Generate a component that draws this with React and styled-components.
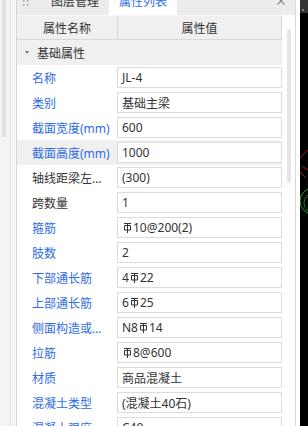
import React from 'react';
import styled, { createGlobalStyle } from 'styled-components';

const Global = createGlobalStyle`
  html, body { margin: 0; padding: 0; background: #fff; overflow: hidden; }
  body {
    font-family: "Noto Sans", "Noto Sans CJK SC", sans-serif;
    font-size: 12px;
    color: #333;
  }
  * { box-sizing: border-box; }
`;

const Screen = styled.div`
  display: flex;
  width: 308px;
  height: 426px;
  overflow: hidden;
  background: #fff;
`;

const SideStrip = styled.div`
  width: 16px;
  flex: none;
  display: flex;
  background: #f4f4f4;
`;

const SideThumbCol = styled.div`
  width: 11px;
  padding: 0 4px 0 2px;
  border-right: 1px solid #e0e0e0;
`;

const SideThumb = styled.div`
  height: 137px;
  border-radius: 0 0 2px 2px;
  background: #e0e0e0;
`;

const Panel = styled.div`
  width: 280px;
  flex: none;
  display: flex;
  flex-direction: column;
  border-left: 1px solid #d4d4d4;
  border-right: 1px solid #d9d9d9;
  background: #fff;
`;

const TabBar = styled.div`
  height: 28px;
  margin-top: -13px;
  flex: none;
  display: flex;
  align-items: stretch;
  background: #ececec;
`;

const Tab = styled.div`
  display: flex;
  align-items: center;
  padding: 0 10px 0 ${(p) => (p.$grip ? 6 : 10)}px;
  gap: 22px;
  background: ${(p) => (p.$active ? '#fff' : 'transparent')};
  color: ${(p) => (p.$active ? '#2e6be6' : '#333')};
  white-space: nowrap;
`;

const Close = styled.div`
  margin-left: auto;
  margin-right: 10px;
  display: flex;
  align-items: center;
`;

const Body = styled.div`
  flex: 1;
  display: flex;
  min-height: 0;
`;

const Table = styled.div`
  width: 265px;
  flex: none;
  display: flex;
  flex-direction: column;
`;

const ScrollCol = styled.div`
  flex: 1;
  padding: 14px 4px 0 5px;
`;

const ScrollThumb = styled.div`
  height: 154px;
  border-radius: 2px;
  background: #e6e6e6;
`;

const HeaderRow = styled.div`
  display: grid;
  grid-template-columns: 100px 165px;
  height: 25px;
  flex: none;
  background: #f0f0f0;
`;

const HeaderCell = styled.div`
  display: flex;
  align-items: center;
  justify-content: center;
  border-bottom: 1px solid #d9d9d9;
  border-top: 1px solid #f7f7f7;
  ${(p) => p.$value && 'border-left: 1px solid #d9d9d9; border-right: 1px solid #d9d9d9;'}
`;

const GroupRow = styled.div`
  height: 25px;
  flex: none;
  display: flex;
  align-items: center;
  gap: 8px;
  padding-left: 8px;
  background: #f0f0f0;
`;

const Caret = styled.span`
  width: 0;
  height: 0;
  border-left: 2.5px solid transparent;
  border-right: 2.5px solid transparent;
  border-top: 3px solid #777;
`;

const PropRow = styled.div`
  display: grid;
  grid-template-columns: 100px 165px;
  align-items: center;
  height: 25px;
  flex: none;
  background: ${(p) => (p.$hover ? '#f0f0f0' : '#fff')};
`;

const Label = styled.div`
  padding: 0 6px 0 15px;
  color: ${(p) => (p.$plain ? '#333' : '#2e6be6')};
  white-space: nowrap;
  overflow: hidden;
  text-overflow: ellipsis;
`;

const ValueBox = styled.div`
  height: 21px;
  display: flex;
  align-items: center;
  padding: 0 4px;
  border: 1px solid #dcdcdc;
  background: #fff;
  color: #333;
  white-space: nowrap;
  overflow: hidden;
`;

const Canvas = styled.div`
  flex: 1;
  margin-left: 4px;
  background: #000;
  position: relative;
`;

const CanvasArt = styled.svg`
  position: absolute;
  inset: 0;
`;

const Rebar = styled.svg`
  width: 9px;
  height: 11px;
  margin: 0 1px 0 1px;
  flex: none;
`;

const RebarSym = () => (
  <Rebar viewBox="0 0 9 11">
    <path d="M1 1.5H8M4.5 1.5V11M1.5 3.5H7.5V8H1.5Z" fill="none" stroke="#333" strokeWidth="1" />
  </Rebar>
);

const Grip = () => (
  <svg width="6" height="10" viewBox="0 0 6 10">
    {[0, 4].map((x) =>
      [1, 5, 9].map((y) => <rect key={`${x}-${y}`} x={x} y={y - 1} width="1.5" height="1.5" fill="#999" />)
    )}
  </svg>
);

const V = ({ parts }) => (
  <>
    {parts.map((p, i) => (p === '#' ? <RebarSym key={i} /> : <span key={i}>{p}</span>))}
  </>
);

const rows = [
  { label: '名称', value: ['JL-4'] },
  { label: '类别', value: ['基础主梁'] },
  { label: '截面宽度(mm)', value: ['600'] },
  { label: '截面高度(mm)', value: ['1000'], hover: true },
  { label: '轴线距梁左边线距离(mm)', value: ['(300)'], plain: true },
  { label: '跨数量', value: ['1'], plain: true },
  { label: '箍筋', value: ['#', '10@200(2)'] },
  { label: '肢数', value: ['2'] },
  { label: '下部通长筋', value: ['4', '#', '22'] },
  { label: '上部通长筋', value: ['6', '#', '25'] },
  { label: '侧面构造或受扭筋(总配筋值)', value: ['N8', '#', '14'] },
  { label: '拉筋', value: ['#', '8@600'] },
  { label: '材质', value: ['商品混凝土'] },
  { label: '混凝土类型', value: ['(混凝土40石)'] },
  { label: '混凝土强度等级', value: ['C40'] },
];

export default function App() {
  return (
    <Screen>
      <Global />
      <SideStrip>
        <SideThumbCol>
          <SideThumb />
        </SideThumbCol>
      </SideStrip>
      <Panel>
        <TabBar>
          <Tab $grip>
            <Grip />
            <span>图层管理</span>
          </Tab>
          <Tab $active>属性列表</Tab>
          <Close>
            <svg width="8" height="8" viewBox="0 0 8 8">
              <path d="M0.5 0.5L7.5 7.5M7.5 0.5L0.5 7.5" stroke="#888" strokeWidth="1.1" />
            </svg>
          </Close>
        </TabBar>
        <Body>
          <Table>
            <HeaderRow>
              <HeaderCell>属性名称</HeaderCell>
              <HeaderCell $value>属性值</HeaderCell>
            </HeaderRow>
            <GroupRow>
              <Caret />
              <span>基础属性</span>
            </GroupRow>
            {rows.map((r) => (
              <PropRow key={r.label} $hover={r.hover}>
                <Label $plain={r.plain}>{r.label}</Label>
                <ValueBox>
                  <V parts={r.value} />
                </ValueBox>
              </PropRow>
            ))}
          </Table>
          <ScrollCol>
            <ScrollThumb />
          </ScrollCol>
        </Body>
      </Panel>
      <Canvas>
        <CanvasArt width="8" height="426" viewBox="0 0 8 426">
          <rect x="0" y="0" width="8" height="13" fill="#333" />
          <circle cx="3" cy="10" r="0.8" fill="#ddd" />
          <path d="M0 158L8 150M0 172L6 178M2 166L8 170" stroke="#c22" strokeWidth="0.8" />
          <circle cx="13" cy="201" r="13" fill="none" stroke="#1c9a2a" strokeWidth="1" />
          <circle cx="14" cy="203" r="10" fill="none" stroke="#1c9a2a" strokeWidth="0.8" />
        </CanvasArt>
      </Canvas>
    </Screen>
  );
}
